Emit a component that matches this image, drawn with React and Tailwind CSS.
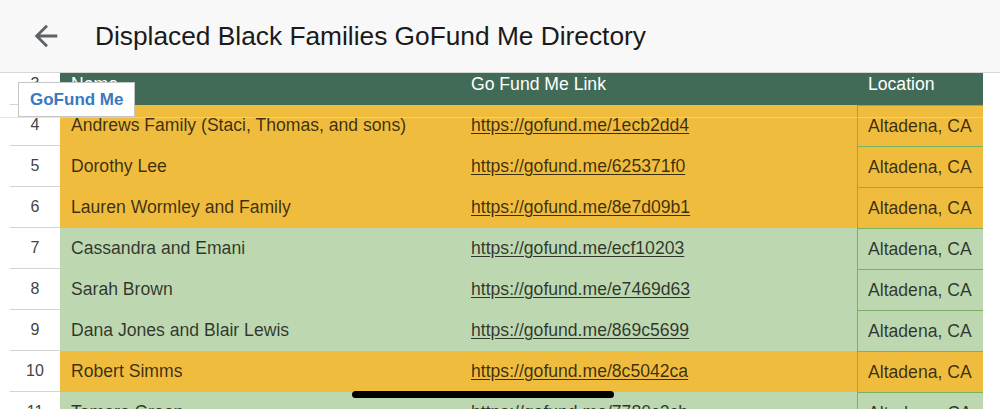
import { MdArrowBack } from "react-icons/md"

const rows = [
    { n: 4, name: "Andrews Family (Staci, Thomas, and sons)", link: "https://gofund.me/1ecb2dd4", tone: "yellow" },
    { n: 5, name: "Dorothy Lee", link: "https://gofund.me/625371f0", tone: "yellow" },
    { n: 6, name: "Lauren Wormley and Family", link: "https://gofund.me/8e7d09b1", tone: "yellow" },
    { n: 7, name: "Cassandra and Emani", link: "https://gofund.me/ecf10203", tone: "green" },
    { n: 8, name: "Sarah Brown", link: "https://gofund.me/e7469d63", tone: "green" },
    { n: 9, name: "Dana Jones and Blair Lewis", link: "https://gofund.me/869c5699", tone: "green" },
    { n: 10, name: "Robert Simms", link: "https://gofund.me/8c5042ca", tone: "yellow" },
    { n: 11, name: "Tamara Green", link: "https://gofund.me/7780c2cb", tone: "green" },
]

export default function App() {

    return (
        <div className="relative w-[1000px] h-[409px] overflow-hidden bg-white font-['Liberation_Sans',Arial,sans-serif]">
            <Header />
            <Sheet />
            <div className="absolute left-[18px] top-[82px] w-[117px] h-[35px] bg-white border border-[#c6c6c6] flex items-center pl-[11px]">
                <span className="text-[17px] font-bold text-[#3b78c0]">GoFund Me</span>
            </div>
            <div className="absolute left-0 top-[117px] w-[983px] h-px bg-[#d8d8d8]/70"></div>
            <div className="absolute left-[352px] top-[391px] w-[262px] h-[7px] rounded-full bg-black"></div>
        </div>
    )

}

function Header() {

    return (
        <header className="h-[73px] bg-[#f8f8f8] border-b border-[#d6d6d6] flex items-center">
            <MdArrowBack className="ml-[29px] text-[#5f6368]" size={34} />
            <h1 className="ml-[32px] text-[26.3px] text-[#1a1a1a] leading-none">Displaced Black Families GoFund Me Directory</h1>
        </header>
    )

}

function Sheet() {

    return (
        <div className="h-[336px] overflow-hidden pl-[10px]">
            <div className="-mt-[9px] text-[17.6px]">
                <div className="flex h-[41px]">
                    <div className="w-[50px] flex items-center justify-center text-[16px] text-[#444] border-b border-[#d4d4d4]">3</div>
                    <div className="w-[923px] flex items-center bg-[#426b57] text-white">
                        <div className="w-[400px] pl-[11px]">Name</div>
                        <div className="w-[397px] pl-[11px]">Go Fund Me Link</div>
                        <div className="w-[126px] pl-[11px]">Location</div>
                    </div>
                </div>
                {rows.map(r => <Row key={r.n} row={r} />)}
            </div>
        </div>
    )

}

function Row({row}) {

    const yellow = row.tone == "yellow"

    return (
        <div className="flex h-[41px]">
            <div className="w-[50px] flex items-center justify-center text-[16px] text-[#444] border-b border-[#d4d4d4]">{row.n}</div>
            <div className={"w-[923px] flex text-black/75 " + (yellow ? "bg-[#f0bc3e]" : "bg-[#bdd7b0]")}>
                <div className="w-[400px] pl-[11px] flex items-center">{row.name}</div>
                <div className="w-[397px] pl-[11px] flex items-center underline underline-offset-2">{row.link}</div>
                <div className="w-[126px] pl-[10px] flex items-center border-l border-t border-[#79b262]">Altadena, CA</div>
            </div>
        </div>
    )

}
